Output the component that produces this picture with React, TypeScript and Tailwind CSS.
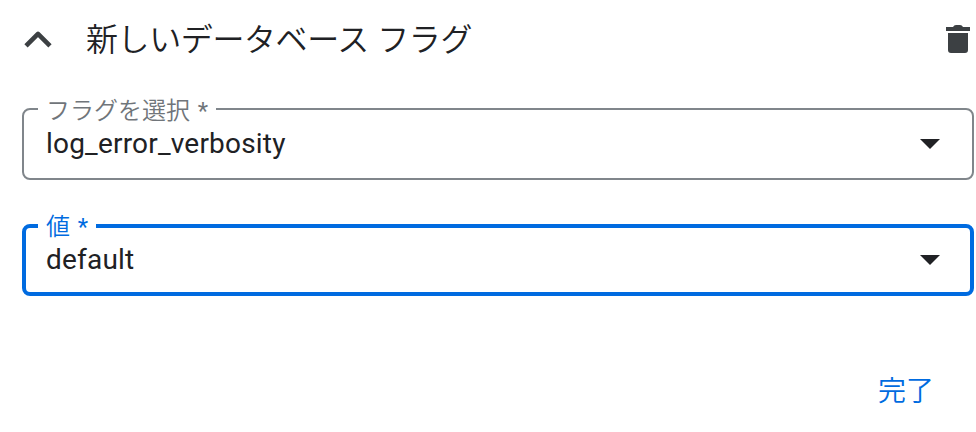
import React from 'react';

interface SelectFieldProps {
  label: string;
  value: string;
  focused?: boolean;
}

const SelectField: React.FC<SelectFieldProps> = ({ label, value, focused = false }) => (
  <fieldset
    className={
      focused
        ? 'h-[84px] min-w-0 rounded-[8px] border-4 border-[#006be0] pl-[12px] pr-[30px] text-[#006be0]'
        : 'h-[84px] min-w-0 rounded-[8px] border-2 border-[#80868b] pl-[14px] pr-[32px] text-[#70757a]'
    }
  >
    <legend
      className={`${focused ? 'h-[28px]' : 'h-[26px]'} px-[8px] text-[24px] font-[350] leading-[30px] whitespace-nowrap [word-spacing:2px]`}
    >
      {label} <span className="font-normal">*</span>
    </legend>
    <div className={`${focused ? 'h-[40px]' : 'h-[44px]'} flex items-center justify-between pl-[8px] text-[#202124]`}>
      <span className="text-[28px] leading-none tracking-[0.2px]">{value}</span>
      <svg width="20" height="10" viewBox="0 0 20 10" fill="currentColor">
        <path d="M0 0h20L10 10z" />
      </svg>
    </div>
  </fieldset>
);

export default function App() {
  return (
    <div className="h-[432px] overflow-hidden bg-white font-['Roboto','Noto_Sans_CJK_JP',sans-serif]">
      <header className="flex h-[80px] items-center pl-[24px] pr-[6px]">
        <svg width="28" height="18" viewBox="0 0 28 18" fill="none" stroke="#3c4043" strokeWidth="4.6" strokeLinejoin="round">
          <path d="M2 14.9 14 2.9l12 12" />
        </svg>
        <h1 className="ml-[34px] flex-1 text-[32px] font-[350] tracking-[-0.4px] text-[#202124] [word-spacing:1px]">
          新しいデータベース フラグ
        </h1>
        <svg className="-mt-[2px]" width="24" height="28" viewBox="0 0 24 28" fill="#3c4043">
          <path d="M0 2h7q1-2 3-2h4q2 0 3 2h7v4H0zM2 8h20v17q0 3-3 3H5q-3 0-3-3z" />
        </svg>
      </header>
      <main className="flex flex-col gap-[32px] pt-[16px] pl-[22px] pr-[2px]">
        <SelectField label="フラグを選択" value="log_error_verbosity" />
        <SelectField label="値" value="default" focused />
      </main>
      <footer className="flex justify-end pt-[75px] pr-[42px]">
        <button className="text-[28px] font-[350] text-[#006be0]">完了</button>
      </footer>
    </div>
  );
}
